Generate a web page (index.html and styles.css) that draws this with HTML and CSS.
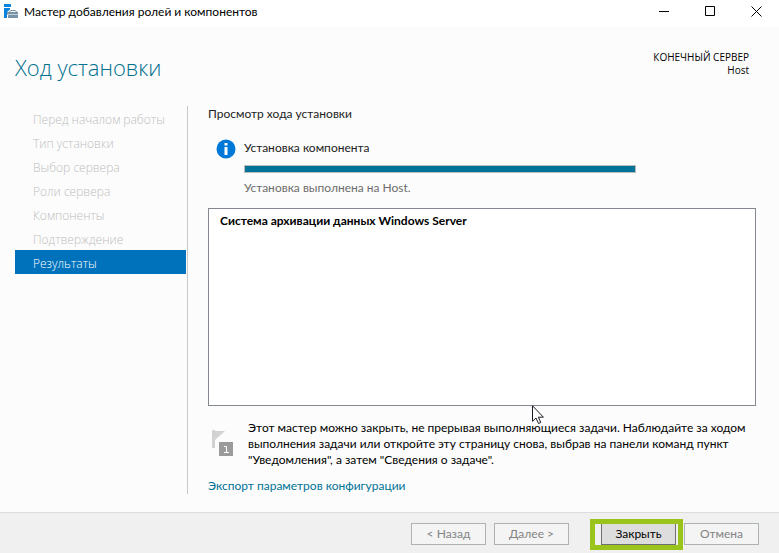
FILE: index.html
```html
<!DOCTYPE html>
<html lang="ru">
<head>
<meta charset="utf-8">
<meta name="viewport" content="width=device-width, initial-scale=1">
<title>Мастер добавления ролей и компонентов</title>
<link rel="stylesheet" href="styles.css">
</head>
<body>
<header class="titlebar">
  <svg class="app-icon" width="15" height="15" viewBox="0 0 15 15" aria-hidden="true">
    <path fill="#0a84dc" d="M0 0h7v3H0zM0 4h6v1.500L3 8v6H0z"/>
    <path fill="none" stroke="#7b93a6" d="M5.500 8.500V7.500L7 6.500h4l1.500 1v1"/>
    <path fill="#7b93a6" d="M3 8h11v2H3zM4 11h10v3H4z"/>
    <path fill="#c3d0da" d="M3 10h11v1H3z"/>
  </svg>
  <span class="window-title">Мастер добавления ролей и компонентов</span>
  <button class="window-button" type="button" aria-label="Свернуть">
    <svg width="11" height="11" viewBox="0 0 11 11"><path d="M0 5.500h10" stroke="#000" fill="none"/></svg>
  </button>
  <button class="window-button" type="button" aria-label="Развернуть">
    <svg width="11" height="11" viewBox="0 0 11 11"><path d="M.5.5h9v9h-9z" stroke="#000" fill="none"/></svg>
  </button>
  <button class="window-button" type="button" aria-label="Закрыть окно">
    <svg width="11" height="11" viewBox="0 0 11 11"><path d="M.5.5l10 10M10.500.5l-10 10" stroke="#000" fill="none"/></svg>
  </button>
</header>

<div class="page-head">
  <h1 class="page-title">Ход установки</h1>
  <p class="server">КОНЕЧНЫЙ СЕРВЕР<br>Host</p>
</div>

<div class="body">
  <nav class="steps">
    <ol class="step-list">
      <li class="step">Перед началом работы</li>
      <li class="step">Тип установки</li>
      <li class="step">Выбор сервера</li>
      <li class="step">Роли сервера</li>
      <li class="step">Компоненты</li>
      <li class="step">Подтверждение</li>
      <li class="step step-current" aria-current="step">Результаты</li>
    </ol>
  </nav>
  <main class="content">
    <h2 class="section-title">Просмотр хода установки</h2>
    <div class="status">
      <svg class="info-icon" width="20" height="20" viewBox="0 0 20 20" aria-hidden="true">
        <circle cx="10" cy="10" r="9.500" fill="#0078d7"/>
        <path fill="#fff" d="M8.500 4h3v2.500h-3zM8.500 8h3v8h-3z"/>
      </svg>
      <div class="status-body">
        <label class="status-title" for="install-progress">Установка компонента</label>
        <progress class="progress" id="install-progress" value="100" max="100"></progress>
        <p class="status-note">Установка выполнена на Host.</p>
      </div>
    </div>
    <div class="results">Система архивации данных Windows Server</div>
    <div class="hint">
      <svg class="flag-icon" width="21" height="26" viewBox="0 0 21 26" aria-hidden="true">
        <path fill="#d2d2d2" d="M0 0h3v18H0zM3 1h10L3 10z"/>
        <path fill="#9b9b9b" d="M7 12h14v14H7z"/>
        <path fill="none" stroke="#fff" d="M12 16.500h2.500V22M12 22.500h5"/>
      </svg>
      <p class="hint-text">Этот мастер можно закрыть, не прерывая выполняющиеся задачи. Наблюдайте за ходом выполнения задачи или откройте эту страницу снова, выбрав на панели команд пункт "Уведомления", а затем "Сведения о задаче".</p>
    </div>
    <a class="export" href="#export">Экспорт параметров конфигурации</a>
  </main>
</div>

<footer class="footer">
  <button class="button" type="button" disabled>&lt; Назад</button>
  <button class="button" type="button" disabled>Далее &gt;</button>
  <div class="highlighted">
    <button class="button button-default" type="button">Закрыть</button>
    <span class="highlight"></span>
  </div>
  <button class="button" type="button" disabled>Отмена</button>
</footer>

<svg class="cursor" width="13" height="20" viewBox="0 0 13 20" aria-hidden="true">
  <path fill="#fff" stroke="#1a1a24" d="M.5.8v15.500l3.500-3.300 2.500 5.500 2.300-1-2.400-5.300h5z"/>
</svg>
</body>
</html>
```
FILE: styles.css
```css
* {
  box-sizing: border-box;
}

body {
  margin: 0;
  min-height: 100vh;
  display: flex;
  flex-direction: column;
  position: relative;
  background: #fcfcfc;
  color: #000;
  font: 12px/16px Lato, "Noto Sans", sans-serif;
}

h1, h2, p, ol {
  margin: 0;
  padding: 0;
  font-weight: 400;
}

button {
  font: inherit;
}

.titlebar {
  display: flex;
  align-items: center;
  height: 27px;
  padding: 0 0 4px 4px;
  background: #fff;
}

.window-title {
  flex: 1;
  margin-left: 5px;
}

.window-button {
  display: flex;
  align-items: center;
  justify-content: center;
  width: 46px;
  height: 23px;
  padding: 0;
  border: 0;
  background: none;
}

.page-head {
  display: flex;
  justify-content: space-between;
  align-items: flex-start;
  height: 79px;
  padding: 24px 30px 0 15px;
}

.page-title {
  color: #00708f;
  font-family: "Open Sans", sans-serif;
  font-size: 22px;
  font-weight: 300;
  line-height: 32px;
}

.server {
  font-family: "Open Sans", sans-serif;
  font-size: 10px;
  line-height: 13px;
  text-align: right;
}

.body {
  flex: 1;
  display: flex;
  padding: 0 23px 18px 15px;
}

.steps {
  flex: none;
  width: 173px;
  padding-right: 1px;
  border-right: 1px solid #c8c8c8;
}

.step-list {
  list-style: none;
}

.step {
  height: 24px;
  padding-left: 18px;
  color: #bebebe;
  font-family: "Open Sans", sans-serif;
  font-weight: 300;
  line-height: 27px;
  white-space: nowrap;
}

.step-current {
  background: #0072bc;
  color: #fff;
}

.content {
  flex: 1;
  display: flex;
  flex-direction: column;
  min-width: 0;
  padding-left: 20px;
}

.section-title {
  color: #222;
  font-size: 12px;
  line-height: 16px;
}

.status {
  display: flex;
  gap: 8px;
  margin-top: 18px;
  padding-left: 8px;
}

.info-icon {
  flex: none;
  margin-top: -1px;
}

.status-body {
  flex: 1;
  display: flex;
  flex-direction: column;
  max-width: 392px;
}

.status-title {
  color: #222;
}

.progress {
  width: 100%;
  height: 8px;
  margin: 9px 0 7px;
  border: 1px solid #bcbcbc;
  background: #e6e6e6;
  appearance: none;
}

.progress::-webkit-progress-bar {
  background: #e6e6e6;
}

.progress::-webkit-progress-value {
  background: #007396;
}

.status-note {
  color: #6d6d6d;
}

.results {
  flex: 1;
  margin-top: 12px;
  padding: 4px 11px;
  border: 1px solid #828790;
  background: #fff;
  font-weight: 700;
}

.hint {
  display: flex;
  gap: 15px;
  margin-top: 14px;
  padding-left: 4px;
}

.flag-icon {
  flex: none;
  margin-top: 10px;
}

.export {
  align-self: flex-start;
  margin-top: 10px;
  color: #007396;
  text-decoration: none;
}

.footer {
  display: flex;
  justify-content: flex-end;
  align-items: flex-start;
  gap: 8px;
  height: 41px;
  padding: 10px 20px 0;
  border-top: 1px solid #dcdcdc;
  background: #f0f0f0;
}

.button {
  width: 75px;
  height: 22px;
  padding: 0;
  border: 1px solid #adb2b5;
  background: #f4f4f4;
  color: #838383;
}

.highlighted {
  position: relative;
  margin-left: 24px;
}

.button-default {
  display: block;
  border-color: #707070;
  background: #ddd;
  color: #000;
}

.highlight {
  position: absolute;
  inset: -4px -7px -5px -11px;
  border: 5px solid #9ac31c;
  pointer-events: none;
}

.cursor {
  position: absolute;
  left: 532px;
  top: 405px;
}
```
